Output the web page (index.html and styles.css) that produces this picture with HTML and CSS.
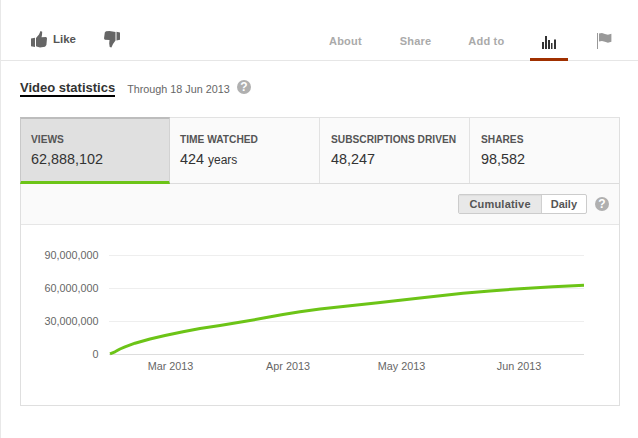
FILE: index.html
```html
<!DOCTYPE html>
<html lang="en">
<head>
<meta charset="UTF-8">
<meta name="viewport" content="width=device-width, initial-scale=1.0">
<title>Video statistics</title>
<link rel="stylesheet" href="styles.css">
</head>
<body>
<div id="page">
    <!-- Actions bar -->
    <div class="actions">
        <div class="rating">
            <svg class="thumb" width="16" height="17" viewBox="0 0 16 17"><path d="M0 7.500l4-.8v9.300l-4-.7zM5 7l3-3.500L9.500 0l1.700.8-.2 3.200-.5 2.200 4.700-.2.8 1.200-.6 6.800-1.400 1.800-5 .6-3.500-.8-.5-.6z" fill="#666"/></svg>
            <span class="like">Like</span>
            <svg class="thumb dislike" width="16" height="17" viewBox="0 0 16 17"><path d="M16 1.500l-3.500-.8v8.800l3.500-.7zM11.500 1l-6-1-3.500.3-1.200 1.200-.8 6 .8 1.300 4.700.2-.3 3.500.5 3.500 1.700.5 1.600-3.500 2.500-3.500z" fill="#666"/></svg>
        </div>
        <div class="action-tabs">
            <span class="action-tab about">About</span>
            <span class="action-tab share">Share</span>
            <span class="action-tab addto">Add to</span>
            <div class="stats-tab">
                <svg width="14" height="13" viewBox="0 0 14 13"><path d="M0 6h2v7H0zM3 0h2v13H3zM6 4h2v9H6zM9 7h1.500v6H9zM12 3.500h2V13h-2z" fill="#333"/></svg>
            </div>
            <svg class="flag" width="15" height="16" viewBox="0 0 15 16"><path d="M0 0h1v16H0z" fill="#999"/><path d="M2 .5l3-.5 3 1 3 .8 3.500-1v8l-3.500 1-3-1-3-.8-3 .5z" fill="#999"/></svg>
        </div>
    </div>

    <!-- Title -->
    <div class="heading">
        <h2 class="title">Video statistics</h2>
        <span class="through">Through 18 Jun 2013</span>
        <span class="help help-top">?</span>
    </div>

    <!-- Stats panel -->
    <div class="panel">
        <div class="tabs">
            <div class="tab active tab-views">
                <div class="tab-label">VIEWS</div>
                <div class="tab-value">62,888,102</div>
            </div>
            <div class="tab tab-time">
                <div class="tab-label">TIME WATCHED</div>
                <div class="tab-value">424 <small>years</small></div>
            </div>
            <div class="tab tab-subs">
                <div class="tab-label">SUBSCRIPTIONS DRIVEN</div>
                <div class="tab-value">48,247</div>
            </div>
            <div class="tab tab-shares">
                <div class="tab-label">SHARES</div>
                <div class="tab-value">98,582</div>
            </div>
        </div>
        <div class="toolbar">
            <div class="toggle">
                <span class="toggle-btn on">Cumulative</span>
                <span class="toggle-btn daily">Daily</span>
            </div>
            <span class="help">?</span>
        </div>
        <div class="chart">
            <svg width="598" height="180" viewBox="21 225 598 180">
                <g class="grid">
                    <line x1="109" y1="255.500" x2="584" y2="255.500"/>
                    <line x1="109" y1="288.500" x2="584" y2="288.500"/>
                    <line x1="109" y1="321.500" x2="584" y2="321.500"/>
                    <line class="base" x1="109" y1="354.500" x2="584" y2="354.500"/>
                </g>
                <g class="y-labels">
                    <text x="98.500" y="259">90,000,000</text>
                    <text x="98.500" y="292">60,000,000</text>
                    <text x="98.500" y="325">30,000,000</text>
                    <text x="98.500" y="358">0</text>
                </g>
                <g class="x-labels">
                    <text x="170.500" y="370">Mar 2013</text>
                    <text x="288" y="370">Apr 2013</text>
                    <text x="401.500" y="370">May 2013</text>
                    <text x="519" y="370">Jun 2013</text>
                </g>
                <polyline class="line" points="110,353.800 115,351.800 120,349 125,346.800 135,343.200 150,339 165,335.500 183,331.700 200,328.500 220,325.500 247,321 265,317.800 283,314.500 300,311.800 320,309 350,305.700 378,302.700 420,298 463,293.300 490,291 520,288.700 553,286.700 584,285.300"/>
            </svg>
        </div>
    </div>
</div>
</body>
</html>
```

FILE: styles.css
```css
/* Video statistics page */
html, body {
    margin: 0;
    padding: 0;
    background: #fff;
}

body {
    font-family: "Liberation Sans", Arial, sans-serif;
    color: #333;
    overflow: hidden;
}

#page {
    width: 638px;
    height: 438px;
    border-left: 1px solid #e8e8e8;
    box-sizing: border-box;
}

/* Actions bar */
.actions {
    display: flex;
    justify-content: space-between;
    height: 60px;
    border-bottom: 1px solid #e6e6e6;
}

.rating {
    display: flex;
    align-items: flex-start;
    padding: 31px 0 0 30px;
}

.like {
    margin: 1px 0 0 6px;
    font-size: 11.500px;
    font-weight: bold;
    line-height: 14px;
    color: #555;
}

.dislike {
    margin-left: 28px;
}

.action-tabs {
    display: flex;
    align-items: flex-start;
    margin-right: 26px;
    width: 283px;
}

.action-tab {
    margin-top: 35px;
    font-size: 11px;
    font-weight: bold;
    line-height: 13px;
    color: #aaa;
    letter-spacing: .2px;
    white-space: nowrap;
}

.share {
    margin-left: 38px;
}

.addto {
    margin-left: 37px;
}

.stats-tab {
    display: flex;
    justify-content: center;
    box-sizing: border-box;
    width: 38px;
    height: 61px;
    margin-left: 26px;
    padding-top: 36px;
    border-bottom: 3px solid #a03000;
}

.flag {
    margin: 33px 0 0 29px;
}

/* Title */
.heading {
    display: flex;
    align-items: flex-start;
    height: 56px;
    padding: 19px 0 0 19px;
    box-sizing: border-box;
}

.title {
    margin: 0;
    font-size: 13px;
    font-weight: bold;
    line-height: 15px;
    color: #333;
    border-bottom: 2px solid #000;
}

.through {
    margin: 3px 0 0 12px;
    font-size: 10.800px;
    line-height: 13px;
    color: #666;
}

.help {
    display: block;
    width: 14px;
    height: 14px;
    border-radius: 50%;
    background: #b0b0b0;
    color: #fff;
    font-size: 12px;
    font-weight: bold;
    line-height: 14px;
    text-align: center;
}

.help-top {
    margin-left: 7px;
}

/* Panel */
.panel {
    width: 600px;
    height: 289px;
    margin-left: 19px;
    box-sizing: border-box;
    border: 1px solid #dfdfdf;
    border-top-color: #e2e2e2;
}

.tabs {
    display: flex;
    height: 65px;
    border-bottom: 1px solid #dcdcdc;
    background: #fafafa;
}

.tab {
    flex: none;
    box-sizing: border-box;
    width: 150px;
    height: 65px;
    padding: 15px 0 0 11px;
    border-right: 1px solid #e2e2e2;
}

.tab-time {
    padding-left: 10px;
}

.tab-shares {
    width: 149px;
    border-right: 0;
}

.tab.active {
    width: 150px;
    height: 67px;
    margin: -1px 0 -1px -1px;
    padding: 14px 0 0 10px;
    background: #e0e0e0;
    border-top: 2px solid #bdbdbd;
    border-left: 1px solid #c8c8c8;
    border-right: 1px solid #d2d2d2;
    border-bottom: 3px solid #6cc417;
}

.tab-label {
    font-size: 10.200px;
    font-weight: bold;
    line-height: 13px;
    color: #555;
}

.tab-value {
    margin-top: 5px;
    font-size: 14.400px;
    line-height: 16px;
    color: #333;
}

.tab-value small {
    font-size: 12px;
}

/* Toolbar */
.toolbar {
    display: flex;
    justify-content: flex-end;
    align-items: center;
    gap: 8px;
    height: 40px;
    padding-right: 10px;
    border-bottom: 1px solid #e6e6e6;
    background: #fafafa;
}

.toggle {
    display: flex;
    height: 20px;
    box-sizing: border-box;
    border: 1px solid #ccc;
    border-radius: 2px;
    background: #fff;
    font-size: 11px;
    font-weight: bold;
    line-height: 18px;
    color: #555;
}

.toggle-btn {
    padding: 0 10px;
}

.toggle-btn.daily {
    padding: 0 9px;
}

.toggle-btn.on {
    background: #e8e8e8;
    border-right: 1px solid #d0d0d0;
    box-shadow: inset 0 1px 1px #ddd;
    letter-spacing: .2px;
}

/* Chart */
.chart {
    height: 180px;
}

.chart svg {
    display: block;
}

.grid line {
    stroke: #eee;
    stroke-width: 1;
}

.grid .base {
    stroke: #ddd;
}

.y-labels text,
.x-labels text {
    font-size: 10.800px;
    fill: #666;
}

.y-labels text {
    text-anchor: end;
}

.x-labels text {
    text-anchor: middle;
}

.line {
    fill: none;
    stroke: #6cc417;
    stroke-width: 3;
    stroke-linejoin: round;
}
```
